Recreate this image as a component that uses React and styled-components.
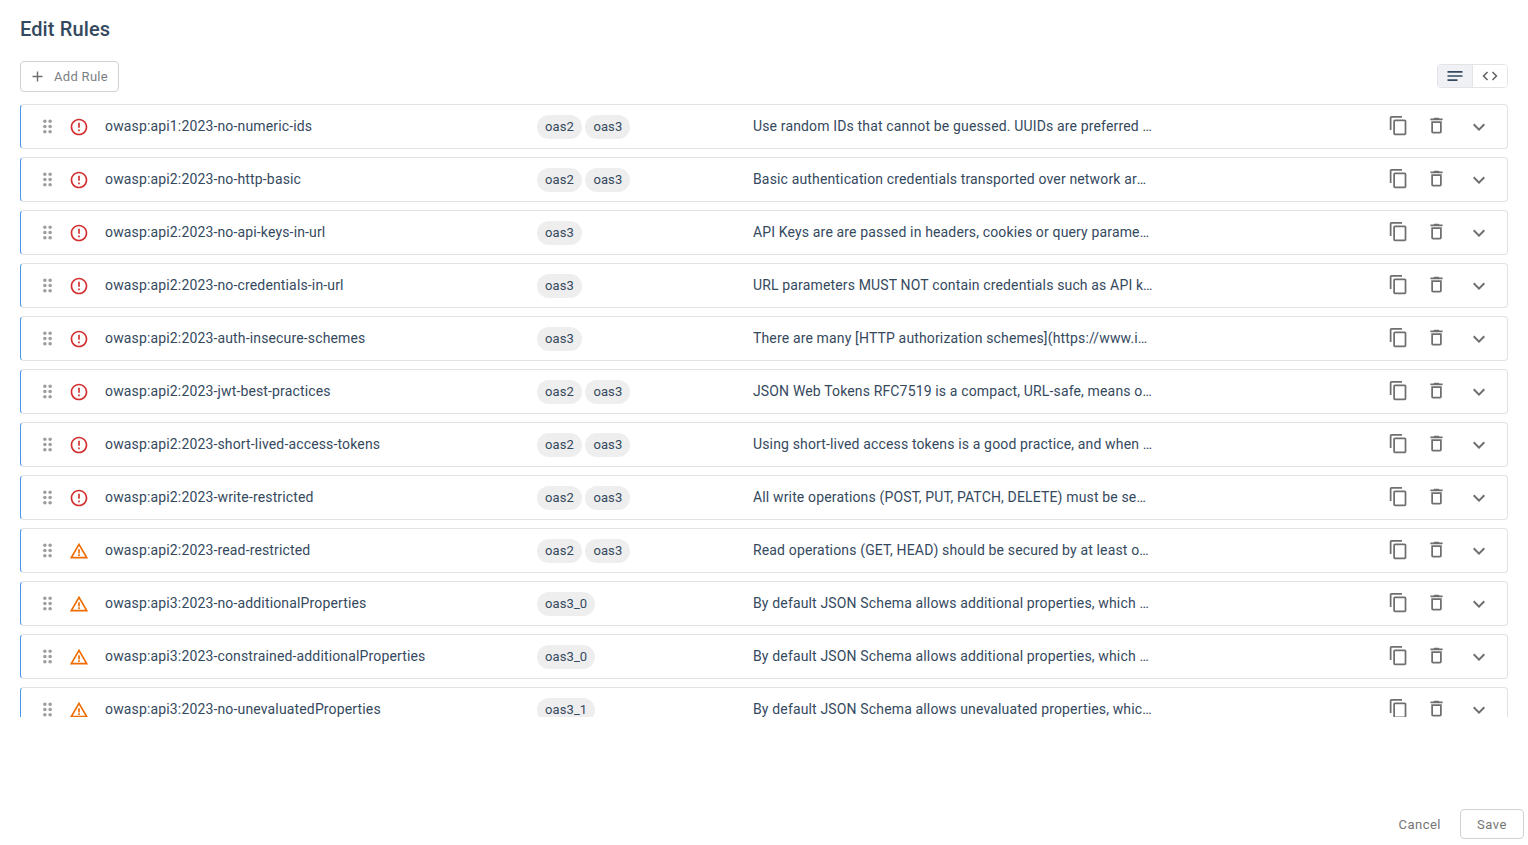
import React from "react";
import styled, { createGlobalStyle } from "styled-components";
import {
  MdAdd,
  MdCode,
  MdContentCopy,
  MdDeleteOutline,
  MdDragIndicator,
  MdErrorOutline,
  MdExpandMore,
  MdNotes,
  MdWarningAmber,
} from "react-icons/md";

const GlobalStyle = createGlobalStyle`
  * {
    box-sizing: border-box;
  }

  html, body {
    margin: 0;
    padding: 0;
    background: #fff;
    font-family: Roboto, "Liberation Sans", sans-serif;
  }
`;

const Page = styled.div`
  display: flex;
  flex-direction: column;
  height: 845px;
  overflow: hidden;
`;

const Title = styled.h2`
  margin: 0;
  padding: 17px 20px 0;
  height: 61px;
  font-size: 20px;
  line-height: 24px;
  font-weight: 500;
  letter-spacing: 0.12px;
  color: #34495e;
`;

const Toolbar = styled.div`
  display: flex;
  align-items: center;
  justify-content: space-between;
  height: 31px;
  margin: 0 20px 0;
`;

const AddButton = styled.button`
  display: flex;
  align-items: center;
  gap: 8px;
  width: 99px;
  height: 31px;
  padding: 0 0 0 8px;
  background: #fff;
  border: 1px solid #cfd2d6;
  border-radius: 4px;
  color: #7b8085;
  font-family: inherit;
  font-size: 13px;
  letter-spacing: 0.3px;

  svg {
    font-size: 17px;
    color: #6e6e6e;
  }
`;

const Toggle = styled.div`
  display: flex;
  height: 24px;
  margin-top: -1px;
  border: 1px solid #e2e4e7;
  border-radius: 4px;
  overflow: hidden;
`;

const ToggleItem = styled.div`
  display: flex;
  align-items: center;
  justify-content: center;
  width: ${(p) => (p.$active ? "35px" : "34px")};
  background: ${(p) => (p.$active ? "#eff1f4" : "#fff")};
  border-right: ${(p) => (p.$active ? "1px solid #e2e4e7" : "none")};
  color: ${(p) => (p.$active ? "#34495e" : "#616161")};
  font-size: ${(p) => (p.$active ? "20px" : "18px")};
`;

const List = styled.div`
  display: flex;
  flex-direction: column;
  gap: 8px;
  height: 613px;
  margin: 12px 20px 0;
  overflow: hidden;
  flex-shrink: 0;
`;

const Row = styled.div`
  display: flex;
  align-items: center;
  flex-shrink: 0;
  height: 45px;
  border: 1px solid #e0e2e4;
  border-left: 1.5px solid #4a96e8;
  border-radius: 4px;
  color: #35495e;
  font-size: 14px;
`;

const Drag = styled.span`
  display: flex;
  justify-content: center;
  width: 21px;
  margin-left: 16px;
  font-size: 21px;
  color: #9e9e9e;
`;

const Severity = styled.span`
  display: flex;
  justify-content: center;
  width: 20px;
  margin-left: 10.5px;
  font-size: 20px;
  color: ${(p) => (p.$level === "error" ? "#d32f2f" : "#ef6c00")};
`;

const Name = styled.div`
  width: 432px;
  margin-left: 16.5px;
  margin-top: -2px;
  letter-spacing: 0.15px;
  white-space: nowrap;
`;

const Tags = styled.div`
  display: flex;
  gap: 3.5px;
  width: 216px;
`;

const Tag = styled.span`
  height: 24px;
  padding: 0 8px;
  border-radius: 12px;
  background: #eeeeee;
  font-size: 13px;
  line-height: 24px;
  letter-spacing: 0.1px;
`;

const Description = styled.div`
  width: 400px;
  margin-top: -2px;
  overflow: hidden;
  white-space: nowrap;
  text-overflow: ellipsis;
  letter-spacing: 0.15px;
`;

const Actions = styled.div`
  display: flex;
  align-items: center;
  margin-left: auto;
  padding-right: 12px;
  color: #6f6f6f;
`;

const ActionIcon = styled.span`
  display: flex;
  justify-content: center;
  width: ${(p) => p.$width}px;
  margin-bottom: ${(p) => p.$lift || 0}px;
  font-size: ${(p) => p.$size}px;
`;

const Footer = styled.div`
  display: flex;
  align-items: center;
  justify-content: flex-end;
  gap: 19px;
  margin-top: auto;
  padding: 0 4px 6px 0;
`;

const CancelButton = styled.button`
  padding: 0;
  background: none;
  border: none;
  color: #757575;
  font-family: inherit;
  font-size: 13px;
  letter-spacing: 0.5px;
`;

const SaveButton = styled.button`
  width: 64px;
  height: 30px;
  background: #fff;
  border: 1px solid #cfd2d6;
  border-radius: 4px;
  color: #757575;
  font-family: inherit;
  font-size: 13px;
  letter-spacing: 0.5px;
`;

const rules = [
  ["owasp:api1:2023-no-numeric-ids", ["oas2", "oas3"], "Use random IDs that cannot be guessed. UUIDs are preferred but any other random identifier works", "error"],
  ["owasp:api2:2023-no-http-basic", ["oas2", "oas3"], "Basic authentication credentials transported over network are more susceptible to interception", "error"],
  ["owasp:api2:2023-no-api-keys-in-url", ["oas3"], "API Keys are are passed in headers, cookies or query parameters to authenticate", "error"],
  ["owasp:api2:2023-no-credentials-in-url", ["oas3"], "URL parameters MUST NOT contain credentials such as API key, password, or secret", "error"],
  ["owasp:api2:2023-auth-insecure-schemes", ["oas3"], "There are many [HTTP authorization schemes](https://www.iana.org/assignments/http-authschemes/)", "error"],
  ["owasp:api2:2023-jwt-best-practices", ["oas2", "oas3"], "JSON Web Tokens RFC7519 is a compact, URL-safe, means of representing claims to be transferred", "error"],
  ["owasp:api2:2023-short-lived-access-tokens", ["oas2", "oas3"], "Using short-lived access tokens is a good practice, and when using OAuth 2 this is done by", "error"],
  ["owasp:api2:2023-write-restricted", ["oas2", "oas3"], "All write operations (POST, PUT, PATCH, DELETE) must be secured by at least one security scheme", "error"],
  ["owasp:api2:2023-read-restricted", ["oas2", "oas3"], "Read operations (GET, HEAD) should be secured by at least one security scheme", "warn"],
  ["owasp:api3:2023-no-additionalProperties", ["oas3_0"], "By default JSON Schema allows additional properties, which can potentially lead to mass assignment", "warn"],
  ["owasp:api3:2023-constrained-additionalProperties", ["oas3_0"], "By default JSON Schema allows additional properties, which can potentially lead to mass assignment", "warn"],
  ["owasp:api3:2023-no-unevaluatedProperties", ["oas3_1"], "By default JSON Schema allows unevaluated properties, which can potentially lead to mass assignment", "warn"],
];

const App = () => {
  return (
    <Page>
      <GlobalStyle />
      <Title>Edit Rules</Title>
      <Toolbar>
        <AddButton>
          <MdAdd />
          Add Rule
        </AddButton>
        <Toggle>
          <ToggleItem $active>
            <MdNotes />
          </ToggleItem>
          <ToggleItem>
            <MdCode />
          </ToggleItem>
        </Toggle>
      </Toolbar>
      <List>
        {rules.map(([name, tags, description, level]) => (
          <Row key={name}>
            <Drag>
              <MdDragIndicator />
            </Drag>
            <Severity $level={level}>
              {level === "error" ? <MdErrorOutline /> : <MdWarningAmber />}
            </Severity>
            <Name>{name}</Name>
            <Tags>
              {tags.map((tag) => (
                <Tag key={tag}>{tag}</Tag>
              ))}
            </Tags>
            <Description>{description}</Description>
            <Actions>
              <ActionIcon $width={22} $size={21} $lift={1.5}>
                <MdContentCopy />
              </ActionIcon>
              <ActionIcon $width={54} $size={21} $lift={1.5}>
                <MdDeleteOutline />
              </ActionIcon>
              <ActionIcon $width={32} $size={24}>
                <MdExpandMore />
              </ActionIcon>
            </Actions>
          </Row>
        ))}
      </List>
      <Footer>
        <CancelButton>Cancel</CancelButton>
        <SaveButton>Save</SaveButton>
      </Footer>
    </Page>
  );
};

export default App;
